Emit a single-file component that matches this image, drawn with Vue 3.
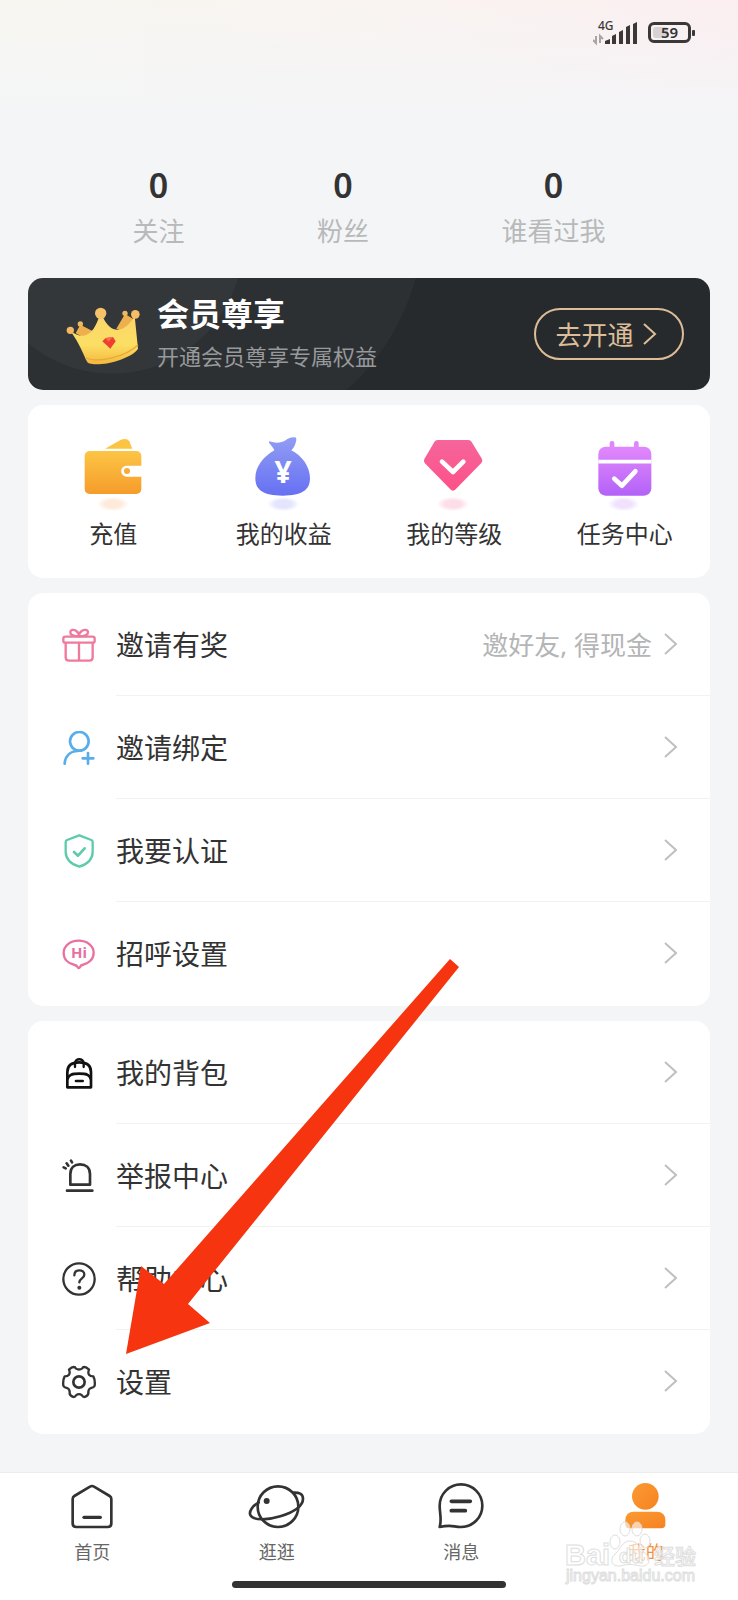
<script setup>
const stats = [
  { value: '0', label: '关注' },
  { value: '0', label: '粉丝' },
  { value: '0', label: '谁看过我' },
]

const shortcuts = [
  { icon: 'wallet', label: '充值' },
  { icon: 'income', label: '我的收益', glyph: '¥' },
  { icon: 'level', label: '我的等级' },
  { icon: 'tasks', label: '任务中心' },
]

const inviteMenu = [
  { icon: 'gift', label: '邀请有奖', hint: '邀好友, 得现金' },
  { icon: 'bind', label: '邀请绑定' },
  { icon: 'verify', label: '我要认证' },
  { icon: 'greet', label: '招呼设置', glyph: 'Hi' },
]

const toolMenu = [
  { icon: 'bag', label: '我的背包' },
  { icon: 'report', label: '举报中心' },
  { icon: 'help', label: '帮助中心' },
  { icon: 'gear', label: '设置' },
]

const tabs = [
  { icon: 'home', label: '首页' },
  { icon: 'planet', label: '逛逛' },
  { icon: 'chat', label: '消息' },
  { icon: 'me', label: '我的', active: true },
]
</script>

<template>
  <div class="screen">
    <svg class="sprite" aria-hidden="true">
      <defs>
        <linearGradient id="g-wallet" x1="0" y1="0" x2="0" y2="1">
          <stop offset="0" stop-color="#fcc545" /><stop offset="1" stop-color="#f59c2b" />
        </linearGradient>
        <linearGradient id="g-income" x1="0" y1="0" x2="0" y2="1">
          <stop offset="0" stop-color="#919df3" /><stop offset="1" stop-color="#6670f3" />
        </linearGradient>
        <linearGradient id="g-level" x1="0" y1="0" x2="0" y2="1">
          <stop offset="0" stop-color="#f5659b" /><stop offset="1" stop-color="#fd5189" />
        </linearGradient>
        <linearGradient id="g-tasks" x1="0" y1="0" x2="0" y2="1">
          <stop offset="0" stop-color="#e288fc" /><stop offset="1" stop-color="#b362f8" />
        </linearGradient>
        <linearGradient id="g-me" x1="0" y1="0" x2="1" y2="1">
          <stop offset="0" stop-color="#fb9b32" /><stop offset="1" stop-color="#f68222" />
        </linearGradient>
        <linearGradient id="g-crown" x1="0" y1="0" x2="0" y2="1">
          <stop offset="0" stop-color="#fbd56b" /><stop offset="0.6" stop-color="#fbdf63" /><stop offset="1" stop-color="#f4b83e" />
        </linearGradient>
        <radialGradient id="s-wallet"><stop offset="0" stop-color="#fdeadb" /><stop offset="0.5" stop-color="#fdeadb" /><stop offset="1" stop-color="#fdeadb" stop-opacity="0" /></radialGradient>
        <radialGradient id="s-income"><stop offset="0" stop-color="#e3e4fd" /><stop offset="0.5" stop-color="#e3e4fd" /><stop offset="1" stop-color="#e3e4fd" stop-opacity="0" /></radialGradient>
        <radialGradient id="s-level"><stop offset="0" stop-color="#fddde8" /><stop offset="0.5" stop-color="#fddde8" /><stop offset="1" stop-color="#fddde8" stop-opacity="0" /></radialGradient>
        <radialGradient id="s-tasks"><stop offset="0" stop-color="#f0e2fd" /><stop offset="0.5" stop-color="#f0e2fd" /><stop offset="1" stop-color="#f0e2fd" stop-opacity="0" /></radialGradient>
      </defs>

      <symbol id="i-wallet" viewBox="0 0 192 228">
        <ellipse cx="96" cy="207" rx="48" ry="22" fill="url(#s-wallet)" />
        <path d="M72 41 L120 14 Q138 8 145 19 L154 41 Z" fill="#fbc443" />
        <rect x="11" y="48" width="170" height="129" rx="15" fill="url(#g-wallet)" />
        <path d="M192 92 H137 A16 16 0 0 0 137 125 H192 Z" fill="#fff" />
        <circle cx="138" cy="108" r="9" fill="#f8ab34" />
      </symbol>
      <symbol id="i-income" viewBox="0 0 192 228">
        <ellipse cx="94" cy="207" rx="48" ry="22" fill="url(#s-income)" />
        <path d="M53 19 C68 25 88 25 102 15 C112 7 122 7 129 7 Q134 8 133 15 C131 28 126 38 118 46 C150 62 174 95 174 130 C174 165 150 182 92 182 C34 182 10 165 10 130 C10 95 34 65 67 46 C62 36 57 31 52 25 Q49 19 53 19 Z" fill="url(#g-income)" />
      </symbol>
      <symbol id="i-level" viewBox="0 0 192 228">
        <ellipse cx="93" cy="207" rx="48" ry="22" fill="url(#s-level)" />
        <path d="M47 15 H139 Q146 15 149 21 L180 72 Q183 78 178 84 L101 163 Q93 171 85 163 L8 84 Q4 78 7 72 L37 21 Q40 15 47 15 Z" fill="url(#g-level)" />
        <path d="M60 80 L93 111 L124 80" fill="none" stroke="#fff" stroke-width="14" stroke-linecap="round" stroke-linejoin="round" />
      </symbol>
      <symbol id="i-tasks" viewBox="0 0 192 228">
        <ellipse cx="92" cy="207" rx="48" ry="22" fill="url(#s-tasks)" />
        <path d="M57 25 V40 M130 25 V40" stroke="#de86fb" stroke-width="14" stroke-linecap="round" />
        <rect x="16" y="35" width="159" height="147" rx="22" fill="url(#g-tasks)" />
        <path d="M16 80 H175" stroke="#fff" stroke-width="11" />
        <path d="M64 131 L87 152 L127 109" fill="none" stroke="#fff" stroke-width="14" stroke-linecap="round" stroke-linejoin="round" />
      </symbol>

      <symbol id="i-gift" viewBox="0 0 102 102">
        <g fill="none" stroke="#ee7b9d" stroke-width="7" stroke-linecap="round" stroke-linejoin="round">
          <rect x="4" y="26" width="94" height="18" rx="6" />
          <path d="M11 45 V88 Q11 98 21 98 H82 Q92 98 92 88 V45 M51 45 V97" />
          <path d="M51 25 C34 25 25 22 25 13 C25 4 35 4 42 8 C48 12 51 18 51 25 C51 18 54 12 60 8 C67 4 78 4 78 13 C78 22 68 25 51 25" />
        </g>
      </symbol>
      <symbol id="i-bind" viewBox="0 0 102 102">
        <g fill="none" stroke="#58aeea" stroke-width="8" stroke-linecap="round">
          <circle cx="52" cy="31" r="28" />
          <path d="M8 98 C9 76 24 60 48 60 M62 82 H94 M78 66 V98" />
        </g>
      </symbol>
      <symbol id="i-verify" viewBox="0 0 102 102">
        <g fill="none" stroke="#5ecbab" stroke-width="7" stroke-linecap="round" stroke-linejoin="round">
          <path d="M52 4 L88 18 Q92 20 92 24 V53 C92 77 74 91 52 98 C30 91 11 77 11 53 V24 Q11 20 15 18 Z" />
          <path d="M36 54 L48 65 L68 43" stroke-width="8" />
        </g>
      </symbol>
      <symbol id="i-greet" viewBox="0 0 102 102">
        <path d="M38 84 C18 80 5 66 5 48 C5 26 25 11 50 11 C75 11 95 26 95 48 C95 66 80 80 61 84 Q56 85 55 89 Q50 97 46 89 Q44 85 38 84 Z" fill="none" stroke="#e9719f" stroke-width="7" stroke-linejoin="round" />
      </symbol>
      <symbol id="i-bag" viewBox="0 0 102 102">
        <g fill="none" stroke="#111" stroke-width="8" stroke-linecap="round" stroke-linejoin="round">
          <path d="M16 94 V48 C16 26 32 19 52 19 C72 19 87 26 87 48 V94 Z" />
          <path d="M39 33 V21 C39 6 65 6 65 21 V33" stroke-width="7" />
          <path d="M17 68 C20 56 30 53 52 53 C74 53 83 56 86 68" />
          <path d="M42 75 H62" />
        </g>
      </symbol>
      <symbol id="i-report" viewBox="0 0 102 102">
        <g fill="none" stroke="#333" stroke-width="8" stroke-linecap="round" stroke-linejoin="round">
          <path d="M25 77 V45 C25 26 38 16 54 16 C71 16 84 26 84 45 V77 Z" />
          <path d="M15 95 H91 M5 25 L11 28 M14 13 L19 20 M27 5 L30 10" />
        </g>
      </symbol>
      <symbol id="i-help" viewBox="0 0 102 102">
        <g fill="none" stroke="#333" stroke-width="7" stroke-linecap="round" stroke-linejoin="round">
          <circle cx="51" cy="51" r="47" />
          <path d="M37 40 C37 29 44 25 52 25 C60 25 67 30 67 38 C67 49 52 49 52 61" />
        </g>
        <circle cx="52" cy="77" r="6" fill="#333" />
      </symbol>
      <symbol id="i-gear" viewBox="0 0 102 102">
        <g fill="none" stroke="#333" stroke-width="7" stroke-linejoin="round">
          <path d="M35 6 Q29 6 21 14 Q25 24 21 29 Q17 34 8 34 Q2 45 4 62 Q7 68 15 69 Q24 72 23 84 Q22 91 34 96 Q40 96 42 91 Q51 84 60 91 Q62 96 68 96 Q80 91 79 84 Q78 72 87 69 Q95 68 98 62 Q100 45 94 34 Q85 34 81 29 Q77 24 81 14 Q73 6 67 6 Q62 6 61 10 Q51 17 41 10 Q40 6 35 6 Z" />
          <circle cx="51" cy="51" r="17" stroke-width="8" />
        </g>
      </symbol>

      <symbol id="i-home" viewBox="0 0 180 144">
        <g fill="none" stroke="#333" stroke-width="8" stroke-linecap="round" stroke-linejoin="round">
          <path d="M84 14 Q90 10 96 14 L143 42 Q148 45 148 51 V124 Q148 135 137 135 H43 Q32 135 32 124 V51 Q32 45 37 42 Z" />
          <path d="M66 106 H115" stroke-width="10" />
        </g>
      </symbol>
      <symbol id="i-planet" viewBox="0 0 180 144">
        <g fill="none" stroke="#333" stroke-width="8" stroke-linecap="round">
          <circle cx="93" cy="74" r="61" />
          <path d="M35 62 C18 70 5 88 10 99 C17 116 62 115 100 103 C140 90 168 72 168 50 C168 35 156 31 138 32" />
        </g>
        <circle cx="59" cy="57" r="9" fill="#333" />
      </symbol>
      <symbol id="i-chat" viewBox="0 0 180 144">
        <g fill="none" stroke="#333" stroke-width="8" stroke-linecap="round" stroke-linejoin="round">
          <path d="M26 135 C33 112 26 95 26 71 A64 64 0 1 1 90 135 C66 135 64 127 26 135 Z" />
          <path d="M61 58 H118 M61 86 H103" stroke-width="11" />
        </g>
      </symbol>
      <symbol id="i-me" viewBox="0 0 180 144">
        <circle cx="88" cy="43" r="40" fill="url(#g-me)" />
        <path d="M54 89 H122 Q148 89 148 115 V127 Q148 139 136 139 H40 Q28 139 28 127 V115 Q28 89 54 89 Z" fill="url(#g-me)" />
      </symbol>
      <symbol id="i-chevron" viewBox="0 0 14 24">
        <path d="M1 2 L12 12 L1 22" fill="none" stroke="currentColor" stroke-width="2" />
      </symbol>
    </svg>

    <header class="status">
      <svg class="signal" viewBox="0 0 46 28" role="img" aria-label="4G">
        <text class="net" x="5" y="12" fill="#3a3838">4G</text>
        <path d="M3 18 V25 L0 22 M7 25 V18 L10 21" fill="none" stroke="#aaa5a5" stroke-width="2" />
        <path d="M12 26 V23 L17 21 V26 Z M19 26 V18 L23 16 V26 Z M26 26 V14 L30 12 V26 Z M33 26 V9 L37 7 V26 Z M40 26 V6 L44 4 V26 Z" fill="#3a3838" />
      </svg>
      <span class="battery"><span class="charge"></span><span class="percent">59</span></span>
    </header>

    <main class="content">
      <section class="stats">
        <a v-for="s in stats" :key="s.label" class="stat" href="#">
          <strong class="stat-value">{{ s.value }}</strong>
          <span class="stat-label">{{ s.label }}</span>
        </a>
      </section>

      <section class="vip">
        <svg class="crown" viewBox="0 0 240 192" aria-hidden="true">
          <path d="M52 62 L94 84 L76 108 L38 88 Z M186 30 L210 44 L204 90 L160 74 Z" fill="#eeb04c" />
          <path d="M22 80 C58 108 88 98 107 42 H121 C140 82 178 98 215 36 L225 134 C208 164 112 190 78 178 C66 172 62 136 22 80 Z" fill="url(#g-crown)" />
          <path d="M68 162 C104 178 190 158 225 122" fill="none" stroke="#e9a93c" stroke-width="4" />
          <circle cx="22" cy="79" r="11" fill="#f2b863" />
          <circle cx="52" cy="60" r="8" fill="#edb866" />
          <circle cx="113" cy="28" r="17" fill="#f6c36a" />
          <circle cx="186" cy="28" r="8" fill="#edb866" />
          <circle cx="217" cy="31" r="13" fill="#f5bd66" />
          <path d="M118 112 L128 102 L150 99 L158 112 L142 134 Z" fill="#ef3f2e" />
          <path d="M128 102 L136 113 L150 99 Z" fill="#fb6b4e" />
        </svg>
        <div class="vip-text">
          <h2 class="vip-title">会员尊享</h2>
          <p class="vip-sub">开通会员尊享专属权益</p>
        </div>
        <button class="vip-button" type="button">
          去开通<svg class="chevron" aria-hidden="true"><use href="#i-chevron" /></svg>
        </button>
      </section>

      <section class="card shortcuts">
        <a v-for="s in shortcuts" :key="s.icon" class="shortcut" href="#">
          <svg class="shortcut-icon" aria-hidden="true">
            <use :href="'#i-' + s.icon" />
            <text v-if="s.glyph" class="yen" x="31" y="48" text-anchor="middle" fill="#fff">{{ s.glyph }}</text>
          </svg>
          <span>{{ s.label }}</span>
        </a>
      </section>

      <ul class="card menu">
        <li v-for="m in inviteMenu" :key="m.icon">
          <a class="row" href="#">
            <svg class="row-icon" aria-hidden="true">
              <use :href="'#i-' + m.icon" />
              <text v-if="m.glyph" class="hi" x="17" y="21" text-anchor="middle" fill="#e9719f">{{ m.glyph }}</text>
            </svg>
            <span class="row-body">
              <span class="row-label">{{ m.label }}</span>
              <span v-if="m.hint" class="row-hint">{{ m.hint }}</span>
              <svg class="chevron" aria-hidden="true"><use href="#i-chevron" /></svg>
            </span>
          </a>
        </li>
      </ul>

      <div class="tools">
        <ul class="card menu">
          <li v-for="m in toolMenu" :key="m.icon">
            <a class="row" href="#">
              <svg class="row-icon" aria-hidden="true"><use :href="'#i-' + m.icon" /></svg>
              <span class="row-body">
                <span class="row-label">{{ m.label }}</span>
                <svg class="chevron" aria-hidden="true"><use href="#i-chevron" /></svg>
              </span>
            </a>
          </li>
        </ul>
        <svg class="pointer" viewBox="0 0 335 396" aria-hidden="true">
          <path d="M1 395 L16 307 L39 325 L325 0 L334 8 L63 345 L85 364 Z" fill="#f6340f" />
        </svg>
      </div>
    </main>

    <footer class="dock">
      <nav class="tabs">
        <a v-for="t in tabs" :key="t.icon" class="tab" :class="{ active: t.active }" href="#">
          <svg class="tab-icon" aria-hidden="true"><use :href="'#i-' + t.icon" /></svg>
          <span>{{ t.label }}</span>
        </a>
      </nav>
      <div class="home-bar"></div>
      <svg class="watermark" viewBox="0 0 140 70" role="img" aria-label="Baidu 经验">
        <g fill="#fff" fill-opacity="0.6" stroke="#dedede" stroke-width="1">
          <ellipse cx="51" cy="23" rx="5" ry="7" />
          <ellipse cx="61" cy="10" rx="5" ry="7" />
          <ellipse cx="73" cy="10" rx="5" ry="7" />
          <ellipse cx="81" cy="22" rx="5" ry="7" />
          <path d="M66 22 C74 22 76 30 82 35 C88 42 84 48 76 47 C69 45 63 45 56 47 C48 48 45 41 51 35 C57 30 58 22 66 22 Z" />
          <text class="wm-latin" x="1" y="46">Bai</text>
          <text class="wm-du" x="55" y="44">du</text>
          <text class="wm-cjk" x="90" y="45">经验</text>
          <text class="wm-url" x="2" y="62">jingyan.baidu.com</text>
        </g>
      </svg>
    </footer>
  </div>
</template>

<style>
body {
  margin: 0;
  background: #f4f5f7;
}
</style>

<style scoped>
.screen {
  display: flex;
  flex-direction: column;
  min-height: 100vh;
  color: #333;
  font-family: "Noto Sans", "Noto Sans CJK SC", sans-serif;
  background:
    linear-gradient(to bottom, rgba(244, 245, 247, 0), #f4f5f7 120px),
    linear-gradient(to right, #f7f6f1, #f9f4f1 50%, #fbeef0) no-repeat,
    #f4f5f7;
}

a {
  color: inherit;
  text-decoration: none;
}

.sprite {
  position: absolute;
  width: 0;
  height: 0;
}

.yen {
  font: 700 30px "Noto Sans", sans-serif;
}

.hi {
  font: 700 15px "Noto Sans", sans-serif;
}

.status {
  display: flex;
  justify-content: flex-end;
  align-items: center;
  gap: 9px;
  height: 64px;
  padding: 0 43px;
}

.signal {
  width: 46px;
  height: 28px;
}

.net {
  font: 500 12px "Noto Sans", sans-serif;
}

.battery {
  position: relative;
  display: flex;
  align-items: center;
  justify-content: center;
  box-sizing: border-box;
  width: 43px;
  height: 21px;
  margin-right: 4px;
  border: 3px solid #3a3838;
  border-radius: 6px;
}

.battery::after {
  content: "";
  position: absolute;
  right: -7px;
  top: 5px;
  width: 3px;
  height: 6px;
  border-radius: 1px;
  background: #3a3838;
}

.charge {
  position: absolute;
  left: 2px;
  top: 2px;
  bottom: 2px;
  width: 40%;
  border-radius: 3px;
  background: #d8d2d4;
}

.percent {
  position: relative;
  font-size: 15px;
  font-weight: 600;
  line-height: 15px;
}

.content {
  flex: 1;
  display: flex;
  flex-direction: column;
  gap: 15px;
  padding: 0 28px 38px;
}

.stats {
  display: flex;
  justify-content: space-evenly;
  margin: 101px -28px 12px;
}

.stat {
  display: flex;
  flex-direction: column;
  align-items: center;
  gap: 6px;
}

.stat-value {
  font-size: 34px;
  font-weight: 600;
  line-height: 40px;
}

.stat-label {
  color: #b8b9ba;
  font-size: 26px;
  line-height: 40px;
}

.vip {
  display: flex;
  align-items: center;
  gap: 14px;
  min-height: 112px;
  padding: 0 26px 0 35px;
  border-radius: 15px;
  background:
    radial-gradient(circle at 84px -35px, #34373a 130px, transparent 131px),
    radial-gradient(circle at 165px -60px, #2d3033 230px, transparent 231px),
    #272a2d;
}

.crown {
  width: 80px;
  height: 64px;
  padding-top: 3px;
}

.vip-text {
  flex: 1;
}

.vip-title {
  margin: 0;
  color: #fff;
  font-size: 32px;
  font-weight: 700;
  line-height: 46px;
}

.vip-sub {
  margin: 0;
  padding-bottom: 2px;
  color: #97999b;
  font-size: 22px;
  line-height: 38px;
}

.vip-button {
  display: flex;
  align-items: center;
  justify-content: center;
  gap: 9px;
  width: 150px;
  height: 52px;
  padding: 0 6px 0 0;
  border: 2px solid #dcbd98;
  border-radius: 26px;
  background: none;
  color: #dcbd98;
  font-family: inherit;
  font-size: 26px;
}

.chevron {
  flex: none;
  width: 14px;
  height: 24px;
}

.card {
  margin: 0;
  border-radius: 15px;
  background: #fff;
}

.shortcuts {
  display: grid;
  grid-template-columns: repeat(4, 1fr);
  padding: 30px 0 29px;
}

.shortcut {
  display: flex;
  flex-direction: column;
  align-items: center;
  gap: 8px;
  font-size: 24px;
  line-height: 30px;
}

.shortcut-icon {
  width: 64px;
  height: 76px;
}

.menu {
  padding: 0 0 1px;
  list-style: none;
}

.row {
  display: flex;
  align-items: center;
  gap: 20px;
  padding-left: 34px;
}

.row-icon {
  flex: none;
  width: 34px;
  height: 34px;
}

.row-body {
  flex: 1;
  display: flex;
  align-items: center;
  gap: 12px;
  min-height: 102px;
  padding-right: 32px;
  border-bottom: 1px solid #f2f2f2;
}

li:last-child .row-body {
  border-color: transparent;
}

.row-label {
  flex: 1;
  font-size: 28px;
}

.row-hint {
  color: #b4b5b6;
  font-size: 26px;
}

.row-body .chevron {
  color: #bfbfbf;
}

.tools {
  position: relative;
}

.pointer {
  position: absolute;
  left: 97px;
  top: -62px;
  width: 335px;
  height: 396px;
  pointer-events: none;
}

.dock {
  position: relative;
  padding: 9px 0 12px;
  border-top: 1px solid #ececee;
  background: #fff;
}

.tabs {
  display: grid;
  grid-template-columns: repeat(4, 1fr);
}

.tab {
  display: flex;
  flex-direction: column;
  align-items: center;
  gap: 9px;
  color: #666;
  font-size: 18px;
  line-height: 26px;
}

.tab.active {
  color: #f0913a;
}

.tab-icon {
  width: 60px;
  height: 48px;
}

.home-bar {
  width: 37%;
  height: 7px;
  margin: 16px auto 0;
  border-radius: 4px;
  background: #333;
}

.watermark {
  position: absolute;
  right: 34px;
  bottom: 11px;
  width: 140px;
  height: 70px;
  pointer-events: none;
}

.wm-latin {
  font: 700 29px "Liberation Sans", sans-serif;
}

.wm-du {
  font: 700 20px "Liberation Sans", sans-serif;
}

.wm-cjk {
  font: 500 21px "Noto Sans CJK SC", sans-serif;
}

.wm-url {
  font: 400 16px "Liberation Sans", sans-serif;
}
</style>
